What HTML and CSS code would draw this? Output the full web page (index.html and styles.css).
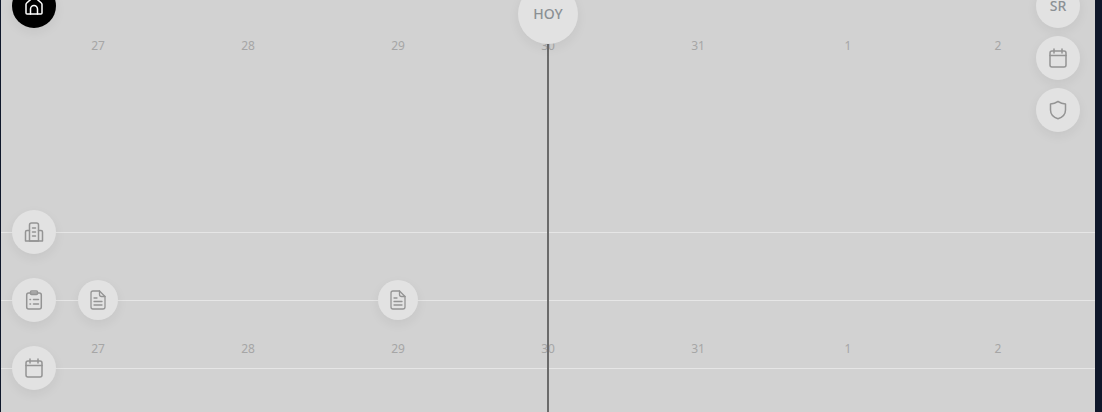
FILE: index.html
```html
<!DOCTYPE html>
<html lang="es">
<head>
<meta charset="utf-8">
<title>Timeline</title>
<link rel="stylesheet" href="styles.css">
</head>
<body>
<main class="canvas">
  <div class="dates dates-top">
    <span>27</span><span>28</span><span>29</span><span>30</span><span>31</span><span>1</span><span>2</span>
  </div>
  <div class="rows">
    <div class="row"></div>
    <div class="row"></div>
    <div class="row"></div>
  </div>
  <div class="dates dates-bottom">
    <span>27</span><span>28</span><span>29</span><span>30</span><span>31</span><span>1</span><span>2</span>
  </div>
  <div class="today-line"></div>

  <button class="fab fab-home"><svg viewBox="0 0 24 24" class="icon"><path d="M4 19v-8.500a2 2 0 0 1 .7-1.500l6-5.300a2 2 0 0 1 2.600 0l6 5.300a2 2 0 0 1 .7 1.500V19a1 1 0 0 1-1 1H5a1 1 0 0 1-1-1z"/><path d="M8.500 20v-5a3.500 3.500 0 0 1 7 0v5"/></svg></button>
  <button class="fab fab-today">HOY</button>
  <button class="fab fab-user">SR</button>
  <button class="fab fab-cal"><svg viewBox="0 0 24 24" class="icon"><rect x="4" y="5" width="16" height="16" rx="2"/><path d="M4 9.500h16M8 3v4M16 3v4"/></svg></button>
  <button class="fab fab-shield"><svg viewBox="0 0 24 24" class="icon"><path d="M12 3.500c2.500 1.600 5 2.300 7.500 2.500v6c0 4.200-3 7.300-7.500 8.800-4.500-1.500-7.500-4.600-7.500-8.800V6C7 5.800 9.500 5.100 12 3.500z"/></svg></button>

  <button class="fab fab-building"><svg viewBox="0 0 24 24" class="icon"><path d="M7.500 21V5a2 2 0 0 1 2-2h5a2 2 0 0 1 2 2v16z"/><path d="M7.500 10.500H5A1.500 1.500 0 0 0 3.500 12v9h17v-9a1.500 1.500 0 0 0-1.500-1.500h-2.500"/><path d="M10.500 8h3M10.500 12h3M10.500 16h3"/></svg></button>
  <button class="fab fab-list"><svg viewBox="0 0 24 24" class="icon"><rect x="4.700" y="5" width="14.600" height="16" rx="2"/><rect x="8.500" y="3" width="7" height="3.500" rx="1"/><path d="M8 11.500h.5M11.500 11.500h5M8 16h.5M11.500 16h5"/></svg></button>
  <button class="fab fab-cal2"><svg viewBox="0 0 24 24" class="icon"><rect x="4" y="5" width="16" height="16" rx="2"/><path d="M4 9.500h16M8 3v4M16 3v4"/></svg></button>

  <button class="pin pin-a"><svg viewBox="0 0 24 24" class="icon"><path d="M13.500 3H7a2 2 0 0 0-2 2v14a2 2 0 0 0 2 2h10a2 2 0 0 0 2-2V8.500z"/><path d="M13.500 3v3.500a2 2 0 0 0 2 2H19M8 10h3M8 13.500h8M8 17h8"/></svg></button>
  <button class="pin pin-b"><svg viewBox="0 0 24 24" class="icon"><path d="M13.500 3H7a2 2 0 0 0-2 2v14a2 2 0 0 0 2 2h10a2 2 0 0 0 2-2V8.500z"/><path d="M13.500 3v3.500a2 2 0 0 0 2 2H19M8 10h3M8 13.500h8M8 17h8"/></svg></button>
</main>
</body>
</html>
```
FILE: styles.css
```css
* { box-sizing: border-box; }
html, body { margin: 0; height: 100%; overflow: hidden; background: #0f172a; }
body { padding: 0 7px 0 1px; font-family: "Noto Sans", sans-serif; }
.canvas { position: relative; height: 412px; background: #d2d2d2; overflow: hidden; padding: 37px 0 0 22px; }
.dates { display: grid; grid-template-columns: repeat(7, 150px); font-size: 12px; line-height: 17px; color: #a6a6a6; text-align: center; }
.rows { padding-top: 153px; }
.row { height: 68px; border-bottom: 1px solid #e6e6e6; margin: 0 -100px 0 -22px; }
.row:first-child { height: 26px; }
.dates-bottom { margin-top: -29px; }
.today-line { position: absolute; left: 546px; top: 30px; bottom: 0; width: 2px; background: #6b6b6b; }
.fab, .pin { position: absolute; display: flex; align-items: center; justify-content: center; padding: 0; border: 0; border-radius: 50%; background: #e2e2e2; color: #949494; box-shadow: 0 4px 12px rgba(0,0,0,.06); font-family: inherit; }
.fab { width: 44px; height: 44px; }
.pin { width: 40px; height: 40px; }
.icon { width: 24px; height: 24px; fill: none; stroke: currentColor; stroke-width: 1.500; stroke-linecap: round; stroke-linejoin: round; }
.pin .icon { stroke-width: 1.300; }
.fab-home { left: 11px; top: -16px; background: #000; color: #fff; }
.fab-today { left: 517px; top: -16px; width: 60px; height: 60px; padding-bottom: 2px; font-size: 14px; font-weight: 500; color: #8b9094; }
.fab-user { left: 1035px; top: -16px; padding-bottom: 2px; font-size: 14px; font-weight: 500; color: #8b9094; }
.fab-cal { left: 1035px; top: 36px; }
.fab-shield { left: 1035px; top: 88px; }
.fab-building { left: 11px; top: 210px; }
.fab-list { left: 11px; top: 278px; }
.fab-cal2 { left: 11px; top: 346px; }
.pin-a { left: 77px; top: 280px; }
.pin-b { left: 377px; top: 280px; }
```
